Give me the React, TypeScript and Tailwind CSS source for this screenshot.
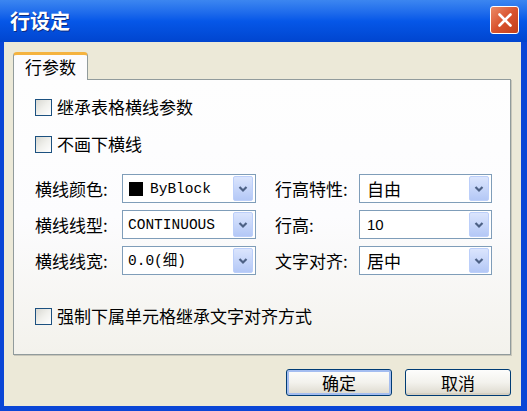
import type { ReactNode } from "react";

const cjk = "font-['Noto_Sans_CJK_SC','Noto_Sans',sans-serif]";
const mono = "font-['Liberation_Mono','Noto_Sans_CJK_SC',monospace]";

const CheckBox = ({ label }: { label: string }) => (
  <div className="flex h-[18px] items-center">
    <span className="h-[17px] w-[17px] border border-[#1c5180] bg-gradient-to-br from-[#d8d8d2] via-[#f0f0ec] to-white" />
    <span className="ml-[5px] text-[17px] leading-[22px] text-black">{label}</span>
  </div>
);

const DropButton = () => (
  <span className="flex h-[25px] w-[20px] items-center justify-center rounded-[2px] border border-[#bccffa] bg-gradient-to-b from-[#dbe5fd] to-[#b4c8f6]">
    <svg width="12" height="10" viewBox="0 0 12 10">
      <path d="M2.5 3 L6 6.5 L9.5 3" fill="none" stroke="#4d6185" strokeWidth="2.2" />
    </svg>
  </span>
);

const Combo = ({ children }: { children: ReactNode }) => (
  <div className="flex h-[29px] items-center border border-[#7f9db9] bg-white pr-[2px]">
    <div className="flex h-full flex-1 items-center whitespace-nowrap">{children}</div>
    <DropButton />
  </div>
);

const Field = ({ label, width, children }: { label: string; width: string; children: ReactNode }) => (
  <div className="flex items-center">
    <span className={`${width} text-[17px] leading-[22px]`}>{label}</span>
    <div className="flex-1">
      <Combo>{children}</Combo>
    </div>
  </div>
);

const XpButton = ({ label, primary }: { label: string; primary?: boolean }) => (
  <button
    className={`flex h-[27px] w-[106px] items-center justify-center rounded-[3px] border border-[#003c74] bg-gradient-to-b from-[#fdfdfc] via-[#f3f2ed] to-[#dcd8cc] text-[17px] leading-[22px] text-black ${
      primary ? "shadow-[inset_0_0_0_2px_#a4bdf0]" : "shadow-[inset_0_-2px_0_#d6d0c2]"
    }`}
  >
    {label}
  </button>
);

export default function App() {
  return (
    <div className={`${cjk} flex h-[411px] w-[527px] flex-col bg-[#0a46d6]`}>
      {/* title bar */}
      <div className="flex h-[42px] items-center justify-between bg-gradient-to-b from-[#3c86f0] via-[#0657e8] to-[#0145cf] pl-[10px] pr-[8px]">
        <span className="text-[20px] font-bold leading-[24px] text-white [text-shadow:1px_1px_0_#0a2a80]">行设定</span>
        <span className="mb-[2px] flex h-[28px] w-[29px] items-center justify-center rounded-[3px] border border-white bg-gradient-to-br from-[#eb8a66] via-[#d9532e] to-[#c23e1a]">
          <svg width="18" height="18" viewBox="0 0 18 18">
            <path d="M3.5 3.5 L14.5 14.5 M14.5 3.5 L3.5 14.5" stroke="white" strokeWidth="2.6" strokeLinecap="round" />
          </svg>
        </span>
      </div>

      {/* body */}
      <div className="ml-[4px] mr-[6px] mb-[5px] flex flex-1 flex-col bg-[#ece9d8] pl-[9px] pr-[10px] pt-[10px]">
        <div className="relative z-10 -mb-px flex h-[28px] w-[75px] items-start justify-center rounded-t-[4px] border-x border-[#919b9c] border-t-[3px] border-t-[#f5b33f] bg-[#fcfcfe] pt-[2px]">
          <span className="text-[17px] leading-[20px]">行参数</span>
        </div>
        <div className="flex h-[276px] flex-col border border-[#919b9c] bg-gradient-to-b from-[#fefefe] via-[#fcfcfe] to-[#f3f2ec] pl-[21px] pt-[18px] shadow-[1px_1px_0_#c9c7ba]">
          <CheckBox label="继承表格横线参数" />
          <div className="mt-[19px]">
            <CheckBox label="不画下横线" />
          </div>

          <div className="mt-[21px] grid w-[457px] grid-cols-[221px_217px] gap-x-[19px] gap-y-[7px]">
            <Field label="横线颜色:" width="w-[87px]">
              <span className="ml-[6px] h-[14px] w-[14px] bg-black" />
              <span className={`${mono} ml-[7px] text-[14.5px] leading-[20px]`}>ByBlock</span>
            </Field>
            <Field label="行高特性:" width="w-[84px]">
              <span className="ml-[7px] text-[17px] leading-[22px]">自由</span>
            </Field>
            <Field label="横线线型:" width="w-[87px]">
              <span className={`${mono} ml-[5px] text-[14.5px] leading-[20px]`}>CONTINUOUS</span>
            </Field>
            <Field label="行高:" width="w-[84px]">
              <span className="ml-[7px] font-['Liberation_Sans',sans-serif] text-[15px] leading-[20px]">10</span>
            </Field>
            <Field label="横线线宽:" width="w-[87px]">
              <span className={`${mono} ml-[5px] text-[14.5px] leading-[20px]`}>0.0(细)</span>
            </Field>
            <Field label="文字对齐:" width="w-[84px]">
              <span className="ml-[7px] text-[17px] leading-[22px]">居中</span>
            </Field>
          </div>

          <div className="mt-[32px]">
            <CheckBox label="强制下属单元格继承文字对齐方式" />
          </div>
        </div>

        <div className="mt-[14px] flex justify-end gap-[13px]">
          <XpButton label="确定" primary />
          <XpButton label="取消" />
        </div>
      </div>
    </div>
  );
}
